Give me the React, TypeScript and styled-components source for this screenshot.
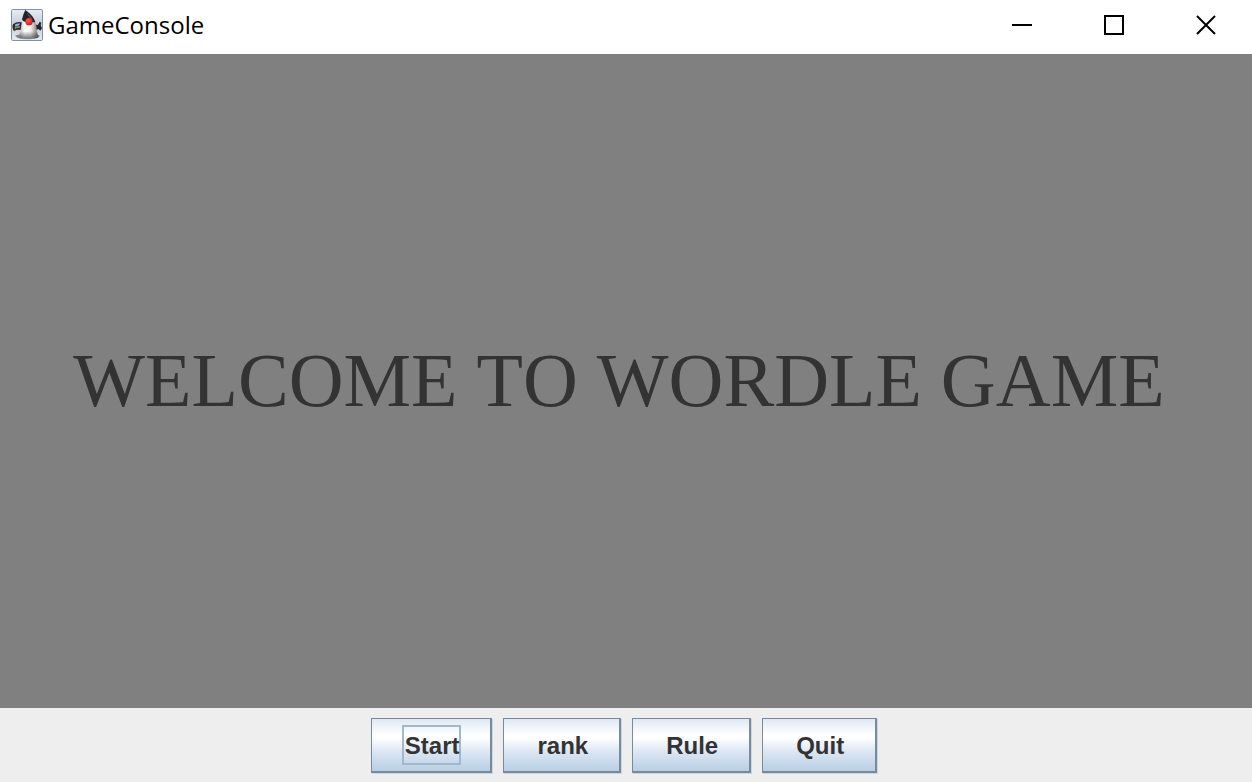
import React from "react";
import styled, { createGlobalStyle } from "styled-components";

const GlobalStyle = createGlobalStyle`
  *, *::before, *::after { box-sizing: border-box; }
  body { margin: 0; }
`;

const Frame = styled.div`
  display: flex;
  flex-direction: column;
  min-height: 100vh;
  background: #ffffff;
`;

const TitleBar = styled.header`
  display: flex;
  align-items: stretch;
  justify-content: space-between;
  height: 54px;
  padding-bottom: 4px;
`;

const TitleGroup = styled.div`
  display: flex;
  align-items: center;
  gap: 5px;
  padding-left: 11px;
`;

const Title = styled.span`
  font: 24px/32px "Open Sans", "Noto Sans", sans-serif;
  color: #000000;
`;

const Controls = styled.div`
  display: flex;
`;

const ControlButton = styled.button`
  display: flex;
  align-items: center;
  justify-content: center;
  width: 92px;
  padding: 0;
  border: 0;
  background: transparent;
  color: #000000;
`;

const Stage = styled.main`
  display: flex;
  flex: 1;
  align-items: center;
  justify-content: center;
  padding: 0 14px 2px 0;
  background: #808080;
`;

const Welcome = styled.h1`
  margin: 0;
  font: 400 76px/88px "Liberation Serif", "Times New Roman", serif;
  font-kerning: none;
  white-space: nowrap;
  color: #333333;
`;

const ButtonPanel = styled.footer`
  display: flex;
  justify-content: center;
  gap: 11px;
  padding: 10px 4px 9px 0;
  background: #eeeeee;
`;

const MetalButton = styled.button`
  height: 55px;
  padding: 0 29px 0 30px;
  border: solid #7a8a99;
  border-width: 1px 2px 2px 1px;
  border-radius: 0;
  background: linear-gradient(#dde8f3 0%, #ffffff 30%, #ffffff 36%, #dce7f3 62%, #b8cfe5 100%);
  box-shadow: 1px 1px 0 #c6d8e9;
  font: bold 24px/34px "Liberation Sans", Arial, sans-serif;
  color: #333333;
`;

const ButtonLabel = styled.span<{ $focused?: boolean }>`
  display: block;
  padding: 2px 0 0 1px;
  border: 2px solid ${(p) => (p.$focused ? "#a3b8cc" : "transparent")};
`;

function DukeIcon() {
  return (
    <svg width="32" height="32" viewBox="0 0 96 96" aria-hidden="true">
      <defs>
        <linearGradient id="tile" x1="0" y1="0" x2="0" y2="1">
          <stop offset="0" stopColor="#e9edf3" />
          <stop offset="0.5" stopColor="#c3ccda" />
          <stop offset="1" stopColor="#e6eaf1" />
        </linearGradient>
        <linearGradient id="belly" x1="0" y1="0" x2="1" y2="0">
          <stop offset="0" stopColor="#b4b4b4" />
          <stop offset="0.3" stopColor="#ffffff" />
          <stop offset="0.6" stopColor="#f1f1f1" />
          <stop offset="1" stopColor="#6e6e6e" />
        </linearGradient>
        <linearGradient id="shade" x1="0" y1="0" x2="0" y2="1">
          <stop offset="0.6" stopColor="#303030" stopOpacity="0" />
          <stop offset="1" stopColor="#303030" stopOpacity="0.65" />
        </linearGradient>
        <radialGradient id="nose" cx="0.4" cy="0.35" r="0.75">
          <stop offset="0" stopColor="#ff5a50" />
          <stop offset="0.7" stopColor="#e02424" />
          <stop offset="1" stopColor="#a81616" />
        </radialGradient>
      </defs>
      <rect x="1.5" y="1.5" width="93" height="93" rx="4" fill="url(#tile)" stroke="#7f92ad" strokeWidth="3" />
      <path d="M13 79 Q50 70 86 79 Q88 90 51 91 Q15 91 13 79Z" fill="#80868f" />
      <path d="M6 46 Q17 37 32 40 L30 63 Q18 60 9 66 Q2 57 6 46Z" fill="#26282a" />
      <path d="M13 45 L27 43 L25 49 L12 53Z" fill="#80b8e4" />
      <path d="M11 55 Q18 51 28 52 L26 57 Q17 56 11 61Z" fill="#b28250" />
      <path d="M73 45 Q81 52 83 44 L86 38 L91 41 L89 49 L93 58 L88 65 L82 60 L76 63Z" fill="#222426" />
      <path d="M35 35 Q31 52 28 66 Q23 78 25 86 Q33 91 40 84 Q51 79 63 84 Q75 92 82 84 Q80 74 77 64 Q77 45 70 36Z" fill="url(#belly)" />
      <path d="M35 35 Q31 52 28 66 Q23 78 25 86 Q33 91 40 84 Q51 79 63 84 Q75 92 82 84 Q80 74 77 64 Q77 45 70 36Z" fill="url(#shade)" />
      <path d="M43 3 Q37 14 33 31 Q36 39 46 39 L73 40 Q68 20 43 3Z" fill="#222326" />
      <path d="M46 9 Q58 19 65 31 L58 29 Q51 20 46 9Z" fill="#505258" />
      <circle cx="54" cy="38" r="11" fill="url(#nose)" />
    </svg>
  );
}

function ControlIcon({ children }: { children: React.ReactNode }) {
  return (
    <svg width="20" height="20" viewBox="0 0 20 20" fill="none" stroke="currentColor" strokeWidth="2" aria-hidden="true">
      {children}
    </svg>
  );
}

const actions = ["Start", "rank", "Rule", "Quit"];

export default function App() {
  return (
    <Frame>
      <GlobalStyle />
      <TitleBar>
        <TitleGroup>
          <DukeIcon />
          <Title>GameConsole</Title>
        </TitleGroup>
        <Controls>
          <ControlButton type="button" aria-label="Minimize">
            <ControlIcon><path d="M0 10H20" /></ControlIcon>
          </ControlButton>
          <ControlButton type="button" aria-label="Maximize">
            <ControlIcon><rect x="1" y="1" width="18" height="18" /></ControlIcon>
          </ControlButton>
          <ControlButton type="button" aria-label="Close">
            <ControlIcon><path d="M1 1L19 19M19 1L1 19" /></ControlIcon>
          </ControlButton>
        </Controls>
      </TitleBar>
      <Stage>
        <Welcome>WELCOME TO WORDLE GAME</Welcome>
      </Stage>
      <ButtonPanel>
        {actions.map((label, index) => (
          <MetalButton type="button" key={label}>
            <ButtonLabel $focused={index === 0}>{label}</ButtonLabel>
          </MetalButton>
        ))}
      </ButtonPanel>
    </Frame>
  );
}
